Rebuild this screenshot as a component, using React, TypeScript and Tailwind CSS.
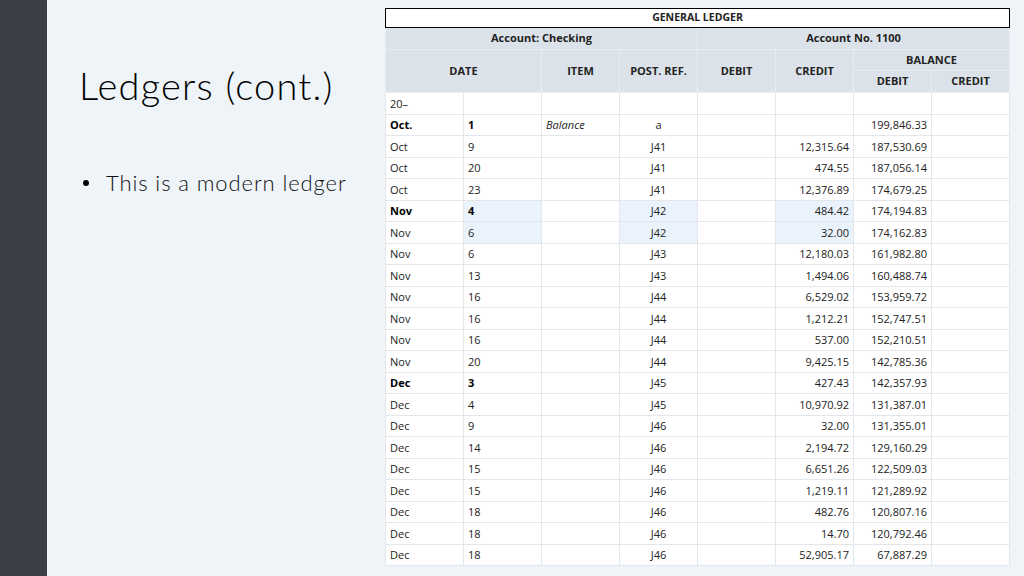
const rows: [string, string, string, string, string, string, boolean?][] = [
  ["20–", "", "", "", "", "", false],
  ["Oct.", "1", "Balance", "a", "", "199,846.33", true],
  ["Oct", "9", "", "J41", "12,315.64", "187,530.69"],
  ["Oct", "20", "", "J41", "474.55", "187,056.14"],
  ["Oct", "23", "", "J41", "12,376.89", "174,679.25"],
  ["Nov", "4", "", "J42", "484.42", "174,194.83", true],
  ["Nov", "6", "", "J42", "32.00", "174,162.83"],
  ["Nov", "6", "", "J43", "12,180.03", "161,982.80"],
  ["Nov", "13", "", "J43", "1,494.06", "160,488.74"],
  ["Nov", "16", "", "J44", "6,529.02", "153,959.72"],
  ["Nov", "16", "", "J44", "1,212.21", "152,747.51"],
  ["Nov", "16", "", "J44", "537.00", "152,210.51"],
  ["Nov", "20", "", "J44", "9,425.15", "142,785.36"],
  ["Dec", "3", "", "J45", "427.43", "142,357.93", true],
  ["Dec", "4", "", "J45", "10,970.92", "131,387.01"],
  ["Dec", "9", "", "J46", "32.00", "131,355.01"],
  ["Dec", "14", "", "J46", "2,194.72", "129,160.29"],
  ["Dec", "15", "", "J46", "6,651.26", "122,509.03"],
  ["Dec", "15", "", "J46", "1,219.11", "121,289.92"],
  ["Dec", "18", "", "J46", "482.76", "120,807.16"],
  ["Dec", "18", "", "J46", "14.70", "120,792.46"],
  ["Dec", "18", "", "J46", "52,905.17", "67,887.29"],
];

export default function App() {
  const cell = "border border-[#e3e7eb] h-[21.5px] px-1 leading-none";
  const hd = "border border-[#e9edf1] bg-[#dce2e9] font-bold text-[11px] text-center";
  return (
    <div className="w-[1024px] h-[576px] flex bg-[#eef4f8] overflow-hidden" style={{ fontFamily: "'Open Sans', sans-serif" }}>
      <div className="w-[47px] bg-[#3b4048] shrink-0" />
      <div className="w-[338px] shrink-0 pl-[32px] pt-[66px]">
        <h1 className="text-[38px] font-light text-black tracking-[1.2px] leading-none whitespace-nowrap" style={{ fontFamily: "Lato, sans-serif" }}>Ledgers (cont.)</h1>
        <div className="mt-[62px] flex items-center gap-[17px] text-[22px] text-[#111] tracking-[0.9px] whitespace-nowrap font-light" style={{ fontFamily: "Lato, sans-serif" }}>
          <span className="w-[6px] h-[6px] rounded-full bg-black ml-[4px] shrink-0" />
          <span>This is a modern ledger</span>
        </div>
      </div>
      <div className="pt-[8px]">
        <table className="table-fixed border-collapse w-[624px] text-[11px] text-[#222] bg-white">
          <colgroup>
            {Array.from({ length: 8 }).map((_, i) => <col key={i} className="w-[78px]" />)}
          </colgroup>
          <thead>
            <tr>
              <th colSpan={8} className="border border-black bg-white h-[19px] text-[10.5px] font-bold">GENERAL LEDGER</th>
            </tr>
            <tr>
              <th colSpan={4} className={hd + " h-[22px]"}>Account: Checking</th>
              <th colSpan={4} className={hd + " h-[22px]"}>Account No. 1100</th>
            </tr>
            <tr>
              <th colSpan={2} rowSpan={2} className={hd}>DATE</th>
              <th rowSpan={2} className={hd}>ITEM</th>
              <th rowSpan={2} className={hd}>POST. REF.</th>
              <th rowSpan={2} className={hd}>DEBIT</th>
              <th rowSpan={2} className={hd}>CREDIT</th>
              <th colSpan={2} className={hd + " h-[21px]"}>BALANCE</th>
            </tr>
            <tr>
              <th className={hd + " h-[22px]"}>DEBIT</th>
              <th className={hd}>CREDIT</th>
            </tr>
          </thead>
          <tbody>
            {rows.map((r, i) => {
              const hl = i === 5 || i === 6;
              const b = r[6] ? "font-bold text-black" : "";
              return (
                <tr key={i}>
                  <td className={`${cell} ${b}`}>{r[0]}</td>
                  <td className={`${cell} ${b} ${hl ? "bg-[#eaf3fc]" : ""}`}>{r[1]}</td>
                  <td className={`${cell} italic`}>{r[2]}</td>
                  <td className={`${cell} text-center ${hl ? "bg-[#eaf3fc]" : ""}`}>{r[3]}</td>
                  <td className={cell}></td>
                  <td className={`${cell} text-right ${hl ? "bg-[#eaf3fc]" : ""}`}>{r[4]}</td>
                  <td className={`${cell} text-right pr-[4px]`}>{r[5]}</td>
                  <td className={cell}></td>
                </tr>
              );
            })}
          </tbody>
        </table>
      </div>
    </div>
  );
}
